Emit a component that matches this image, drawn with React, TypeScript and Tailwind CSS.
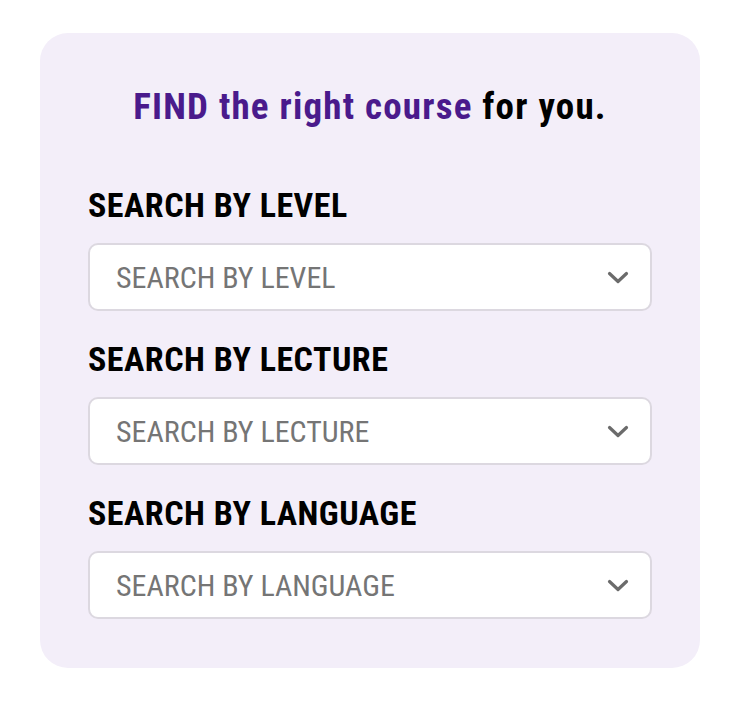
import React from 'react';

const fields = ['SEARCH BY LEVEL', 'SEARCH BY LECTURE', 'SEARCH BY LANGUAGE'];

function Chevron() {
    return (
        <svg width="22" height="13" viewBox="0 0 22 13" fill="none" className="shrink-0">
            <path d="M2.5 2.5 L11 10.5 L19.5 2.5" stroke="#6b6b6b" strokeWidth="3.2" strokeLinecap="round" strokeLinejoin="round" />
        </svg>
    );
}

export default function App() {
    return (
        <div className="min-h-screen bg-white pt-[33px] px-[40px]" style={{ fontFamily: '"Roboto Condensed", Lato, sans-serif' }}>
            <div className="w-[660px] h-[635px] rounded-[28px] bg-[#f3eef9] px-[48px] pt-[52px]">
                <h1 className="text-center text-[37px] leading-[44px] font-bold tracking-[1.2px] text-black">
                    <span className="text-[#4a1a8c]">FIND the right course</span> for you.
                </h1>
                <div className="mt-[56px] flex flex-col gap-[28px]">
                    {fields.map((f) => (
                        <div key={f} className="flex flex-col">
                            <label className="text-[34px] leading-[40px] font-bold tracking-[0.5px] text-black">{f}</label>
                            <div className="mt-[18px] h-[68px] rounded-[10px] border-2 border-[#dcd8e0] bg-white pl-[26px] pr-[21px] flex items-center justify-between">
                                <span className="pt-[2px] text-[30px] leading-[36px] text-[#757575]">{f}</span>
                                <Chevron />
                            </div>
                        </div>
                    ))}
                </div>
            </div>
        </div>
    );
}
